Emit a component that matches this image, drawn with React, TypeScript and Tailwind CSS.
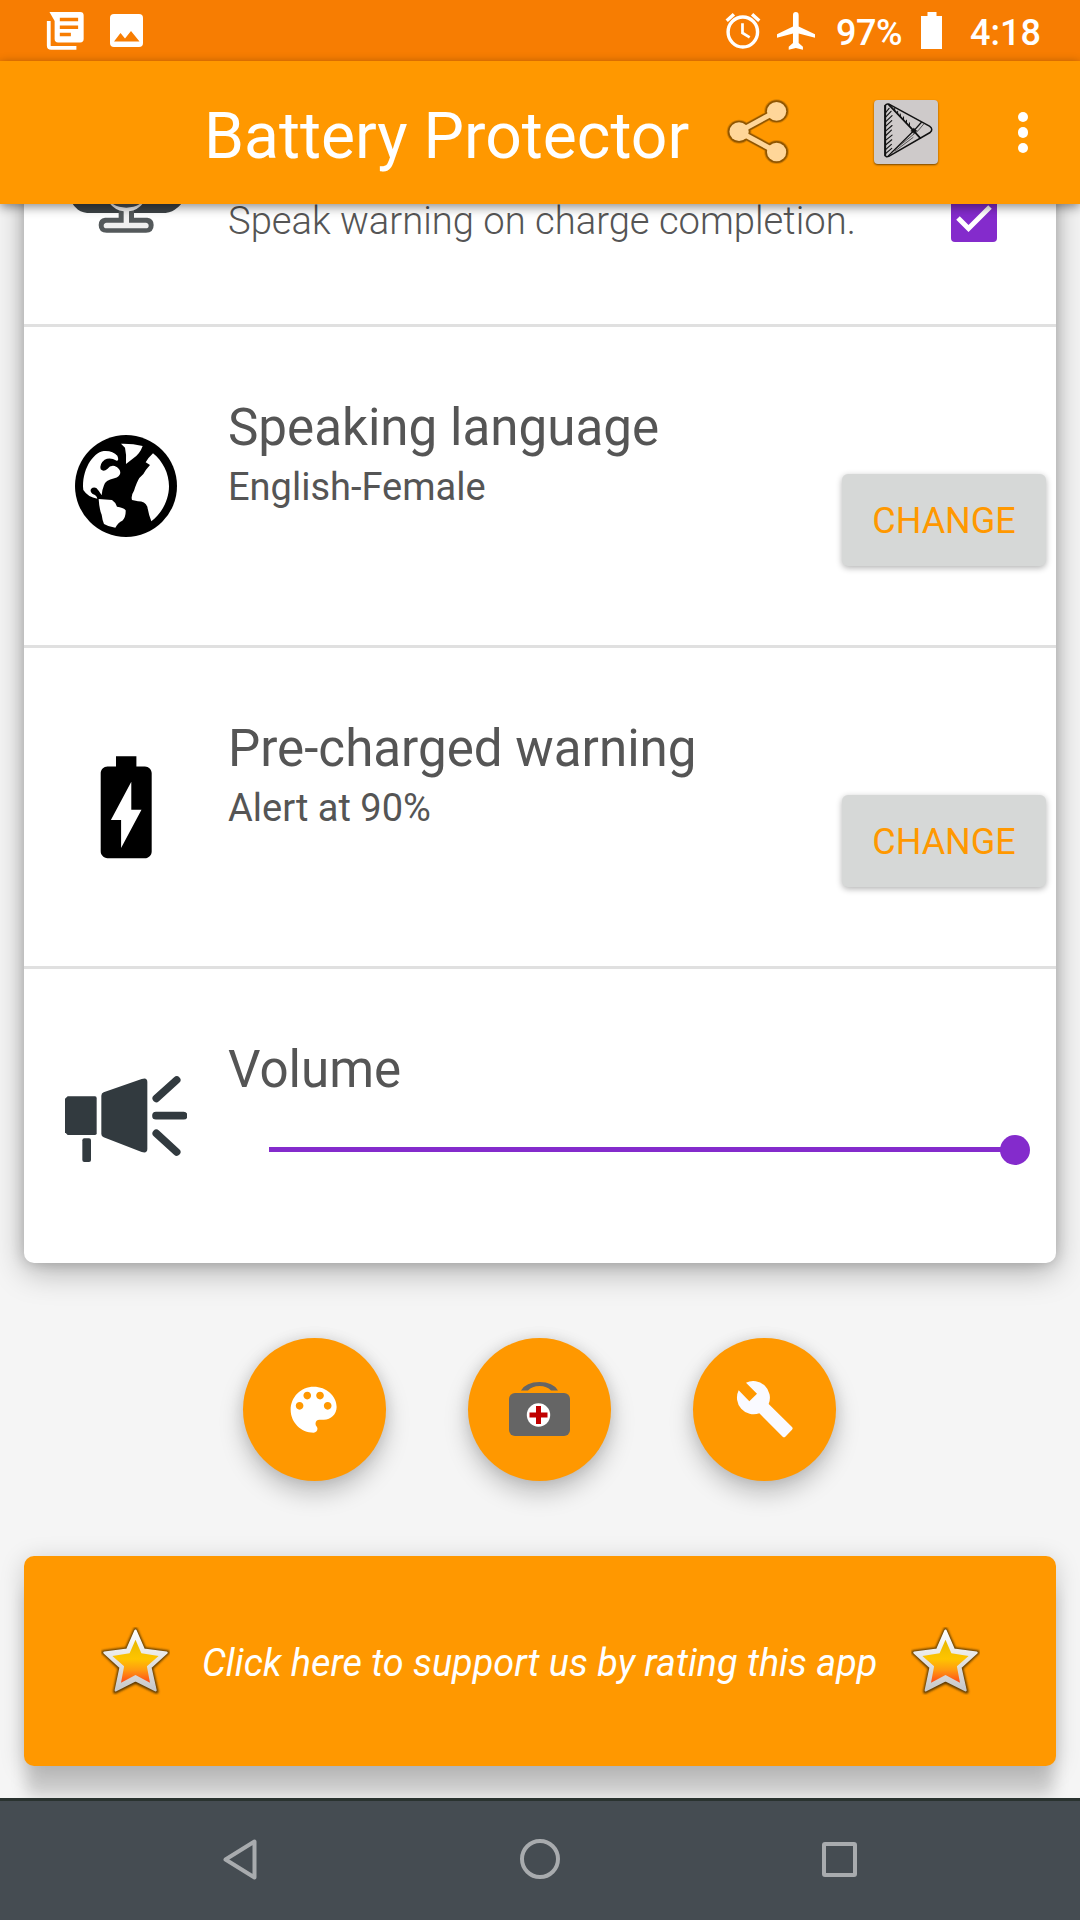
import React from "react";

function StatusBar() {
  return (
    <div className="relative z-20 flex h-[61px] shrink-0 items-center justify-between bg-[#f77d02] pl-[46px] pr-[40px] text-white">
      <div className="flex items-center">
        <svg className="h-[38px] w-[38px]" viewBox="134 36 110 110" preserveAspectRatio="none" fill="none">
          <path d="M144 36H233Q243 36 243 46V114Q243 124 233 124H169Q159 124 159 114V62Z" fill="#fff" />
          <path d="M174 58H227M174 80H227M174 101H206" stroke="#f77d02" strokeWidth="10" />
          <path d="M142 62V133Q142 140 149 140H222" stroke="#fff" strokeWidth="11" />
        </svg>
        <svg className="ml-[26px] h-[33px] w-[33px]" viewBox="0 0 33 33">
          <rect width="33" height="33" rx="4" fill="#fff" />
          <path d="M4 27.5 10.5 19 15 24.5 21 17 29.500 27.500Z" fill="#f77d02" />
        </svg>
      </div>
      <div className="flex items-center">
        <svg className="h-[38px] w-[36px]" viewBox="536 36 105 114" preserveAspectRatio="none" fill="none" stroke="#fff">
          <ellipse cx="588" cy="96" rx="43" ry="45" strokeWidth="10" />
          <path d="M541 62 562 43M636 62 615 43" strokeWidth="10" />
          <path d="M587 70V99L608 112" strokeWidth="8" />
        </svg>
        <svg className="ml-[16px] h-[38px] w-[38px]" viewBox="690 33 107 115" preserveAspectRatio="none" fill="#fff">
          <path d="M743 33Q751 33 751 43V77L797 100V111L751 98V127L763 138V147L743 142 723 147V138L735 127V98L690 111V100L735 77V43Q735 33 743 33Z" />
        </svg>
        <span className="ml-[21px] mt-[5px] w-[68px] whitespace-nowrap text-[36px] font-medium leading-[42px] tracking-[-0.5px]">97%</span>
        <svg className="ml-[17px] h-[37px] w-[21px]" viewBox="0 0 21 37" fill="#fff">
          <path d="M6.500 0H15.500V4H21V37H0V4H6.500Z" />
        </svg>
        <span className="ml-[28px] mt-[5px] w-[70px] whitespace-nowrap text-[36px] font-medium leading-[42px]">4:18</span>
      </div>
    </div>
  );
}

function ShareIcon() {
  return (
    <svg className="-mt-[2px] h-[66px] w-[64px]" viewBox="540 297 186 198" preserveAspectRatio="none">
      <g fill="#8f5500" stroke="#8f5500" opacity=".35">
        <path d="M687 334 578 395 687 456" fill="none" strokeWidth="28" />
        <circle cx="687" cy="334" r="36" stroke="none" />
        <circle cx="578" cy="395" r="36" stroke="none" />
        <circle cx="687" cy="456" r="36" stroke="none" />
      </g>
      <g fill="#8f5500" stroke="#8f5500">
        <path d="M687 334 578 395 687 456" fill="none" strokeWidth="24" />
        <circle cx="687" cy="334" r="33" stroke="none" />
        <circle cx="578" cy="395" r="33" stroke="none" />
        <circle cx="687" cy="456" r="33" stroke="none" />
      </g>
      <g fill="#ffd699" stroke="#ffd699">
        <path d="M687 334 578 395 687 456" fill="none" strokeWidth="15" />
        <circle cx="687" cy="334" r="28" stroke="none" />
        <circle cx="578" cy="395" r="28" stroke="none" />
        <circle cx="687" cy="456" r="28" stroke="none" />
      </g>
    </svg>
  );
}

function PlayTile() {
  return (
    <div className="-mt-[2px] flex h-[64px] w-[64px] rounded-[4px] bg-[#cecaca] shadow-[0_1px_2px_rgba(80,50,0,0.8)]">
      <svg className="h-full w-full" viewBox="521 59 195 193" preserveAspectRatio="none" fill="none" stroke="#111" strokeLinejoin="round" strokeLinecap="round">
        <path d="M555 76Q559 69 568 72L690 138Q703 147 692 157L566 229Q556 233 555 224Z" strokeWidth="4.500" />
        <path d="M555 76V226" strokeWidth="6" />
        <path d="M566 73 642 152 662 174" strokeWidth="5.500" />
        <path d="M563 229 642 152 665 127" strokeWidth="4" />
        <path d="M575 216 655 152 672 132M585 213 640 172" strokeWidth="2" />
        <path d="M634 152 642 144 651 152 643 159Z" fill="#111" strokeWidth="2" />
        <path d="M557 96 567 84M557 110 573 93M557 124 576 106M557 138 575 121M557 152 576 136M557 166 574 150M557 180 576 165M557 194 575 179M557 208 574 193M557 220 575 205" strokeWidth="3.500" />
        <path d="M584 92V84M593 101V93M602 111 601 101M611 120V110M620 129V120M629 138V128" strokeWidth="3" />
      </svg>
    </div>
  );
}

function AppBar() {
  return (
    <div className="relative z-20 flex h-[143px] shrink-0 items-center bg-[#ff9800] pl-[204px] shadow-[0_3px_10px_rgba(0,0,0,0.45)]">
      <h1 className="mt-[6px] w-[522px] whitespace-nowrap text-[64.200px] font-normal leading-[76px] text-white">Battery Protector</h1>
      <ShareIcon />
      <div className="ml-[84px]">
        <PlayTile />
      </div>
      <div className="ml-[80px] flex flex-col gap-[5px]">
        <span className="h-[10.400px] w-[10.400px] rounded-full bg-white" />
        <span className="h-[10.400px] w-[10.400px] rounded-full bg-white" />
        <span className="h-[10.400px] w-[10.400px] rounded-full bg-white" />
      </div>
    </div>
  );
}

function MicIcon() {
  return (
    <svg className="h-[136px] w-[110px]" viewBox="33 -294 330 408">
      <path d="M24 -130H376V0Q372 26 344 44Q330 54 305 54H93Q68 54 54 44Q34 28 24 0Z" fill="#3d4346" />
      <path d="M176 30V68H135Q116 70 116 90Q116 113 140 113H258Q281 113 281 90Q281 70 262 68H222V30Z" fill="#54595b" />
      <path d="M148 24Q165 46 191 49V83H140Q131 84 131 92Q131 100 140 100H257Q266 100 266 92Q266 84 257 83H207V49Q233 46 250 24Z" fill="#f0f0f0" />
      <path d="M160 0H238V28Q222 38 199 38T160 28Z" fill="#4a4f52" />
    </svg>
  );
}

function GlobeIcon() {
  return (
    <svg className="h-[102px] w-[102px]" viewBox="225 163 306 306">
      <circle cx="378" cy="316" r="153" fill="#000" />
      <g fill="#fff">
        <path d="M363 189Q397 188 428 196Q420 219 401 232L378 250Q380 222 375 201Z" />
        <path d="M250 328C244 270 278 216 311 211Q338 209 352 225Q358 240 350 240Q330 228 314 237Q298 249 302 266Q311 275 322 265Q331 253 344 256Q361 263 361 277Q359 289 343 293Q315 299 312 314Q306 328 305 344Q297 330 289 322Q280 318 273 325Q269 333 278 340Q290 343 292 354Q264 350 250 328Z" />
        <path d="M296 355 336 358Q347 365 351 378Q370 380 377 389Q378 409 367 420Q355 425 346 441Q326 439 312 430Q307 418 305 402Q298 387 296 355Z" />
        <path d="M459 218C488 241 507 278 507 317C507 358 485 399 454 422Q446 402 442 378Q435 362 414 362L396 358Q392 345 402 330Q410 305 418 292Q433 279 438 267L450 253 437 245Q444 232 459 218Z" />
      </g>
    </svg>
  );
}

function ChargingBatteryIcon() {
  return (
    <svg className="h-[122.400px] w-[122.400px]" viewBox="0 0 24 24" fill="#000">
      <path d="M15.670 4H14V2h-4v2H8.330C7.600 4 7 4.600 7 5.330v15.330C7 21.400 7.600 22 8.330 22h7.330c.74 0 1.340-.6 1.340-1.330V5.330C17 4.600 16.400 4 15.670 4zM11 20v-5.500H9L13 7v5.500h2L11 20z" />
    </svg>
  );
}

function MegaphoneIcon() {
  return (
    <svg className="mt-[5px] h-[88px] w-[122px]" viewBox="195 105 366 264" fill="#323a3f">
      <path d="M195 176 203 169H285Q290 169 290 174V280Q290 285 285 285H203L195 277Z" />
      <path d="M311 157 425 117Q442 111 442 126V327Q442 341 425 336L311 292Q304 289 304 282V167Q304 160 311 157Z" />
      <rect x="247" y="295" width="26" height="71" rx="6" />
      <path d="M469 175 530 120M468 227H551M469 280 530 336" stroke="#323a3f" strokeWidth="23" strokeLinecap="round" />
    </svg>
  );
}

function Row({ icon, children, last }: { icon: React.ReactNode; children: React.ReactNode; last?: boolean }) {
  return (
    <div className={last ? "flex h-[294px]" : "flex h-[321px] border-b-[3px] border-[#e0e0e0]"}>
      <div className="flex w-[204px] shrink-0 items-center justify-center">{icon}</div>
      {children}
    </div>
  );
}

function Setting({ title, detail }: { title: string; detail: string }) {
  return (
    <>
      <div className="flex-1 whitespace-nowrap pt-[71px]">
        <div className="text-[51.150px] leading-[60px]">{title}</div>
        <div className="mt-[7px] text-[38px] leading-[44px]">{detail}</div>
      </div>
      <button className="mr-[10px] mt-[147px] h-[92px] w-[204px] rounded-[6px] bg-[#d6d8d7] pt-[2px] text-[36px] leading-[42px] text-[#ff9800] shadow-[0_2px_6px_rgba(0,0,0,0.3)]">
        CHANGE
      </button>
    </>
  );
}

function RoundButton({ children }: { children: React.ReactNode }) {
  return (
    <button className="flex h-[143px] w-[143px] items-center justify-center rounded-full bg-[#ff9800] shadow-[0_12px_24px_rgba(0,0,0,0.22),0_0_14px_rgba(0,0,0,0.1)]">
      {children}
    </button>
  );
}

function Star({ id }: { id: string }) {
  return (
    <svg className="h-[68px] w-[69px]" viewBox="294 264 200 204" preserveAspectRatio="none">
      <defs>
        <linearGradient id={id + "-fill"} x1="0" y1="0" x2="0" y2="1">
          <stop offset="0" stopColor="#e8b800" />
          <stop offset=".45" stopColor="#ffc400" />
          <stop offset=".7" stopColor="#ff9c10" />
          <stop offset="1" stopColor="#ff4a18" />
        </linearGradient>
        <linearGradient id={id + "-rim"} x1="0" y1="0" x2="0" y2="1">
          <stop offset="0" stopColor="#fff" />
          <stop offset="1" stopColor="#c8c8c8" />
        </linearGradient>
        <filter id={id + "-soft"} x="-10%" y="-10%" width="120%" height="120%">
          <feGaussianBlur stdDeviation="2.500" />
        </filter>
      </defs>
      <path d="M394 272 419 331 487 340 439 387 455 458 394 428 335 458 349 387 301 340 369 331Z" fill="#5e3a00" stroke="#5e3a00" strokeWidth="12" strokeLinejoin="round" filter={"url(#" + id + "-soft)"} />
      <path d="M394 275 418 332 484 341 437 385 452 454 394 424 337 454 351 385 304 341 370 332Z" fill={"url(#" + id + "-rim)"} stroke={"url(#" + id + "-rim)"} strokeWidth="7" strokeLinejoin="round" />
      <path d="M394 302 411 343 461 351 427 382 436 431 394 408 352 431 361 382 327 351 377 343Z" fill={"url(#" + id + "-fill)"} />
    </svg>
  );
}

function NavBar() {
  return (
    <div className="relative z-20 flex h-[122px] shrink-0 items-center border-t-[3px] border-[#29322f] bg-[#454c52] pb-[3px] pl-[223px]">
      <svg className="h-[41px] w-[34px]" viewBox="0 0 34 41" fill="none" stroke="#a8abae" strokeWidth="4" strokeLinejoin="round">
        <path d="M2.500 20.500 31.500 2.500V38.500Z" />
      </svg>
      <span className="ml-[263px] h-[40px] w-[40px] rounded-full border-[4px] border-[#a8abae]" />
      <span className="ml-[262px] h-[35px] w-[35px] rounded-[3px] border-[4px] border-[#a8abae]" />
    </div>
  );
}

export default function App() {
  return (
    <div className="flex h-[1920px] w-[1080px] flex-col overflow-hidden bg-[#f5f5f5] font-['Roboto',sans-serif]">
      <StatusBar />
      <AppBar />
      <main className="h-[1594px] shrink-0 px-[24px]">
        <section className="-mt-[198px] rounded-[10px] bg-white text-[#555555] shadow-[0_0_14px_rgba(0,0,0,0.2),0_9px_32px_rgba(0,0,0,0.28)]">
          <Row icon={<MicIcon />}>
            <div className="flex-1 whitespace-nowrap pt-[193px] text-[38.200px] font-light leading-[44px]">
              Speak warning on charge completion.
            </div>
            <div className="mr-[59px] mt-[190px] h-[46px] w-[46px] rounded-[4px] bg-[#842bcc]">
              <svg viewBox="0 0 46 46" fill="none" stroke="#fff" strokeWidth="5">
                <path d="M7 22 17.500 32.500 39 11" />
              </svg>
            </div>
          </Row>
          <Row icon={<GlobeIcon />}>
            <Setting title="Speaking language" detail="English-Female" />
          </Row>
          <Row icon={<ChargingBatteryIcon />}>
            <Setting title="Pre-charged warning" detail="Alert at 90%" />
          </Row>
          <Row icon={<MegaphoneIcon />} last>
            <div className="flex-1 pr-[26px] pt-[71px]">
              <div className="text-[51.150px] leading-[60px]">Volume</div>
              <div className="ml-[41px] mt-[34px] flex h-[31px] items-center">
                <div className="h-[5px] flex-1 bg-[#842bcc]" />
                <div className="-ml-[4px] h-[30px] w-[30px] rounded-full bg-[#842bcc]" />
              </div>
            </div>
          </Row>
        </section>

        <div className="mt-[75px] flex justify-center gap-[82px] pr-[2px]">
          <RoundButton>
            <svg className="h-[61.300px] w-[61.300px]" viewBox="0 0 24 24" fill="#fff">
              <path d="M12 3c-4.970 0-9 4.030-9 9s4.030 9 9 9c.83 0 1.500-.67 1.500-1.500 0-.39-.15-.74-.39-1.010-.23-.26-.38-.61-.38-.99 0-.83.67-1.500 1.500-1.500H16c2.760 0 5-2.240 5-5 0-4.420-4.030-8-9-8zm-5.500 9c-.83 0-1.500-.67-1.500-1.500S5.670 9 6.500 9 8 9.670 8 10.500 7.330 12 6.500 12zm3-4C8.670 8 8 7.330 8 6.500S8.670 5 9.500 5s1.500.67 1.500 1.500S10.330 8 9.500 8zm5 0c-.83 0-1.500-.67-1.500-1.500S13.670 5 14.500 5s1.500.67 1.500 1.500S15.330 8 14.500 8zm3 4c-.83 0-1.500-.67-1.500-1.500S16.670 9 17.500 9s1.500.67 1.500 1.500-.67 1.500-1.500 1.500z" />
            </svg>
          </RoundButton>
          <RoundButton>
            <svg className="-mt-[2px] h-[54px] w-[61px]" viewBox="0 0 61 54">
              <path d="M12 8.500Q17 0 30.500 0T49 8.500H42Q38 4 30.500 4T19 8.500Z" fill="#656565" />
              <rect y="11" width="61" height="43" rx="6" fill="#656565" />
              <circle cx="29.500" cy="33" r="11.700" fill="#fff" />
              <path d="M29.500 24V42M20.500 33H38.500" stroke="#c00000" strokeWidth="5" />
            </svg>
          </RoundButton>
          <RoundButton>
            <svg className="h-[57px] w-[57px]" viewBox="588 214 171 171" fill="#fafaff">
              <path d="M618 219A50 50 0 0 1 686 283L756 352Q760 356 756 360L736 381Q732 385 728 381L658 311A50 50 0 0 1 596 242L628 275 651 252Z" />
            </svg>
          </RoundButton>
        </div>

        <div className="mt-[75px] flex h-[210px] items-center rounded-[10px] bg-[#ff9800] pl-[77px] text-white shadow-[0_32px_16px_-2px_rgba(0,0,0,0.17),0_4px_24px_rgba(0,0,0,0.18)]">
          <Star id="left" />
          <span className="ml-[32px] mt-[4px] w-[709px] whitespace-nowrap text-[37.800px] italic leading-[44px]">
            Click here to support us by rating this app
          </span>
          <Star id="right" />
        </div>
      </main>
      <NavBar />
    </div>
  );
}
